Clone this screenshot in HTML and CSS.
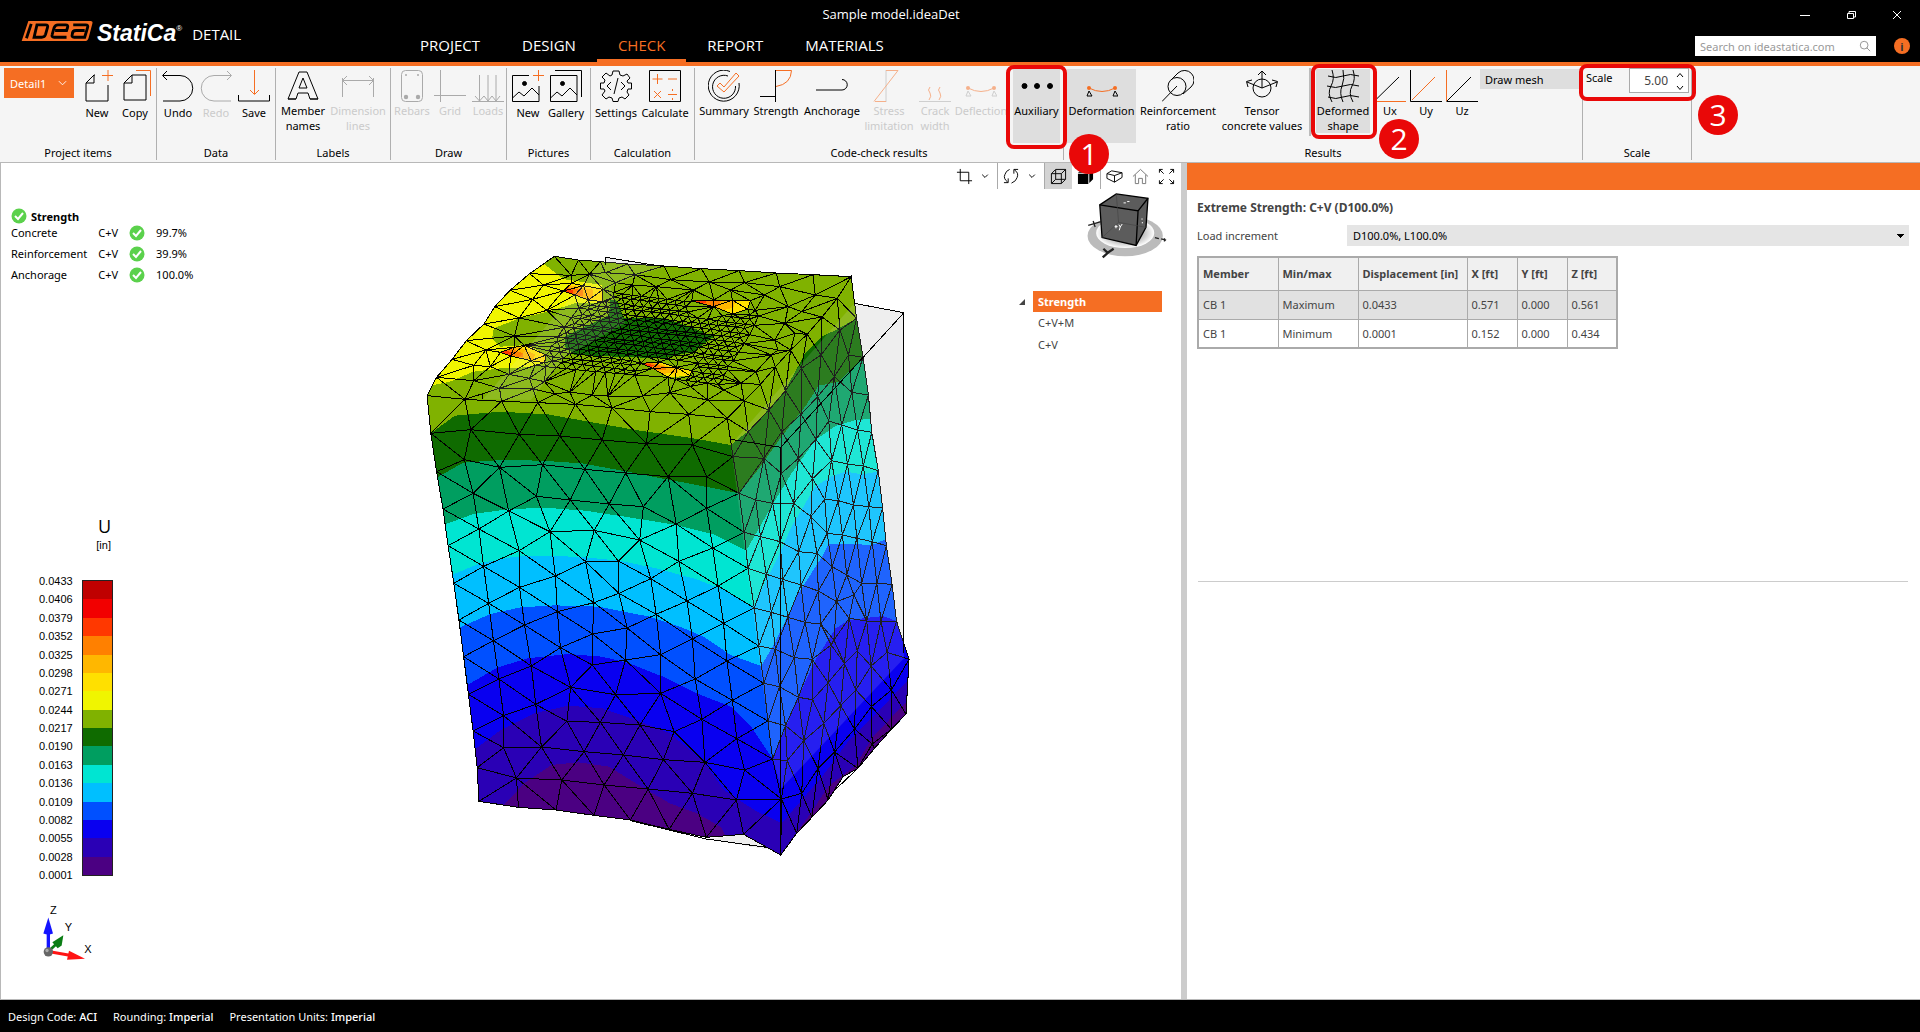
FILE: index.html
```
<!DOCTYPE html>
<html lang="en">
<head>
  <meta charset="UTF-8">
  <title>Sample model.ideaDet</title>
  <link rel="stylesheet" href="styles.css">
</head>
<body>
  <header class="topbar">
    <div class="brand">
      <svg class="logo" viewBox="0 0 74 22" aria-hidden="true">
        <path d="M7 0H72Q75 0 74 3L70 18Q69 21 66 21H0Z" fill="#f56e23"/>
        <g fill="none" stroke="#000" stroke-width="3">
          <path d="M10 3L5 18M16 4H25Q28 4 27 7L25 14Q24 17 21 17H13Z"/>
          <path d="M47 17H34Q31 17 32 14L34 7Q35 4 38 4H46Q49 4 48 7L47 10H35"/>
          <path d="M54 4H67Q70 4 69 7L66 17H55Q52 17 53 14Q53 10 57 10H66"/>
        </g>
      </svg>
      <span class="logo-text">StatiCa<sup>®</sup></span>
      <span class="app-name">DETAIL</span>
    </div>
    <nav class="tabs">
      <a href="#">PROJECT</a>
      <a href="#">DESIGN</a>
      <a href="#" class="active">CHECK</a>
      <a href="#">REPORT</a>
      <a href="#">MATERIALS</a>
    </nav>
    <div class="title">Sample model.ideaDet</div>
    <div class="window-side">
      <div class="window-buttons">
        <button aria-label="Minimize"><svg viewBox="0 0 10 10"><path d="M0 5.500H10"/></svg></button>
        <button aria-label="Restore"><svg viewBox="0 0 10 10"><path d="M1.500 3.500H7.500V8.500H1.500ZM3 3V1.500H9.500V7H8"/></svg></button>
        <button aria-label="Close"><svg viewBox="0 0 10 10"><path d="M1 1L9 9M9 1L1 9"/></svg></button>
      </div>
      <div class="search-row">
        <label class="search">
          <input type="text" aria-label="Search" placeholder="Search on ideastatica.com">
          <svg viewBox="0 0 14 14"><circle cx="6" cy="6" r="4.500"/><path d="M9 9L13 13"/></svg>
        </label>
        <button class="info" aria-label="Info">i</button>
      </div>
    </div>
  </header>

  <section class="ribbon">
    <div class="group g-project">
      <div class="items low">
        <button class="detail-select">Detail1 <svg viewBox="0 0 10 6"><path d="M1 1L5 5L9 1"/></svg></button>
        <button class="tool w38"><svg viewBox="0 0 32 32"><path d="M14 5H13L5 13V31H27V15M13 5V13H5"/><path class="o" d="M27 0V11M21 5.500H32"/></svg>New</button>
        <button class="tool w38"><svg viewBox="0 0 32 32"><path d="M13 5H27V30H5V13ZM13 5V13H5"/><path class="o" d="M17 0.500H31.500V26"/></svg>Copy</button>
      </div>
      <h3>Project items</h3>
    </div>
    <div class="group g-data">
      <div class="items low">
        <button class="tool w38"><svg viewBox="0 0 32 32"><path d="M5 1L0.500 5.500L5 10M1 5.500H18A12.500 12.500 0 0 1 18 31H1"/></svg>Undo</button>
        <button class="tool w38 off"><svg viewBox="0 0 32 32"><path d="M27 1L31.500 5.500L27 10M31 5.500H14A12.500 12.500 0 0 0 14 31H31"/></svg>Redo</button>
        <button class="tool w38"><svg viewBox="0 0 32 32"><path d="M0.500 25V31H31.500V25"/><path class="o" d="M16.500 0V24M12 20L16.500 24.500L21 20"/></svg>Save</button>
      </div>
      <h3>Data</h3>
    </div>
    <div class="group g-labels">
      <div class="items">
        <button class="tool w50"><svg viewBox="0 0 32 32"><path d="M12 2H20L31 29H23L21 23H11L9 29H1ZM12 18H20L16 8ZM1 29H9M23 29H31"/></svg>Member<br>names</button>
        <button class="tool w60 off"><svg viewBox="0 0 32 32"><path d="M0.500 8V27M31.500 8V27M1 10.500H31M5 6L0.500 10.500L5 15M27 6L31.500 10.500L27 15"/></svg>Dimension<br>lines</button>
      </div>
      <h3>Labels</h3>
    </div>
    <div class="group g-draw">
      <div class="items">
        <button class="tool w38 off"><svg viewBox="0 0 32 32"><rect x="5.500" y="0.500" width="21" height="31" rx="4"/><g fill="#aaa" stroke="none"><circle cx="10" cy="5" r="1"/><circle cx="22" cy="5" r="1"/><circle cx="10" cy="27" r="2.200"/><circle cx="22" cy="27" r="2.200"/></g></svg>Rebars</button>
        <button class="tool w38 off"><svg viewBox="0 0 32 32"><path d="M6.500 0V32M0 25.500H32"/></svg>Grid</button>
        <button class="tool w38 off"><svg viewBox="0 0 32 32"><path d="M0 31.500H32M7.500 5V31M16 5V31M24 5V31M3 26L7.500 31L12 26L16 31L20 26L24 31L28 26"/></svg>Loads</button>
      </div>
      <h3>Draw</h3>
    </div>
    <div class="group g-pictures">
      <div class="items low">
        <button class="tool w38"><svg viewBox="0 0 32 32"><path d="M17 5.500H0.500V31.500H27V16M0.500 28L7 22L12 26L20 18L27 25"/><circle cx="12.500" cy="13.500" r="2" fill="#000"/><path class="o" d="M26.500 0V11M21 5.500H32"/></svg>New</button>
        <button class="tool w38"><svg viewBox="0 0 32 32"><path d="M0.500 5.500H27V31.500H0.500ZM5 0.500H31.500V27M0.500 28L7 22L12 26L20 18L27 25"/><circle cx="12.500" cy="13.500" r="2" fill="#000"/></svg>Gallery</button>
      </div>
      <h3>Pictures</h3>
    </div>
    <div class="group g-calc">
      <div class="items low">
        <button class="tool w46"><svg viewBox="0 0 32 32"><path d="M13 1H19L20 5L23 6L27 4L30 8L27 11L28 13H31.500V19H28L27 22L29 25L25 29L22 27L19 28L18 31.500H13L12 28L9 27L6 29L2 25L5 21L4 19H0.500V13H4L5 10L2 7L6 3L10 6L12 5ZM11 12L7 16L11 20M21 12L25 16L21 20M18 8L14 24"/></svg>Settings</button>
        <button class="tool w52"><svg viewBox="0 0 32 32"><path d="M0.500 0.500H31.500V31.500H0.500Z"/><path class="o" d="M8.500 4V14M3.500 9H13.500M19 9H28M5 21L12 28M12 21L5 28M19 24.500H28M23.500 19V21M23.500 28V30"/></svg>Calculate</button>
      </div>
      <h3>Calculation</h3>
    </div>
    <div class="group g-check">
      <div class="items">
        <button class="tool w52"><svg viewBox="0 0 32 32"><path d="M22 1.500A15.500 15.500 0 1 0 31 13M20 6A11.500 11.500 0 1 0 27.500 16"/><path class="o" d="M9 16L12 13L16 17L28 3L31 6L16 22Z"/></svg>Summary</button>
        <button class="tool w52"><svg viewBox="0 0 32 32"><path d="M0 26.500H15.500M15.500 0V32"/><path class="o" d="M16 0.500H31.500Q31 14 16 16.500"/></svg>Strength</button>
        <button class="tool w60"><svg viewBox="0 0 32 32"><path d="M0 20H26A5 5 0 0 0 26 9.500"/></svg>Anchorage</button>
        <button class="tool w54 off faded"><svg viewBox="0 0 32 32"><path d="M13 0V32"/><path class="o" d="M2 31.500H13M13 0.500H25L1 31.500"/></svg>Stress<br>limitation</button>
        <button class="tool w38 off faded"><svg viewBox="0 0 32 32"><path d="M0 31.500H32"/><path class="o" d="M11 17Q8 20 11 23Q13 26 10 30M21 17Q18 20 21 23Q23 26 20 30"/></svg>Crack<br>width</button>
        <button class="tool w54 off faded"><svg viewBox="0 0 32 32"><path d="M3 21L1 26H6ZM29 21L27 26H32Z"/><path class="o" d="M3 18Q16 25 29 18"/><g fill="#f56e23" stroke="none"><circle cx="3" cy="18" r="2"/><circle cx="29" cy="18" r="2"/></g></svg>Deflection</button>
        <button class="tool w47 pressed"><svg viewBox="0 0 32 32"><g fill="#000"><circle cx="3.500" cy="16" r="2.500"/><circle cx="16" cy="16" r="2.500"/><circle cx="29" cy="16" r="2.500"/></g></svg>Auxiliary</button>
      </div>
      <h3>Code-check results</h3>
    </div>
    <div class="group g-results">
      <div class="items">
        <button class="tool w69 pressed"><svg viewBox="0 0 32 32"><path d="M3 21L1 26H6ZM29 21L27 26H32Z"/><path class="o" d="M3 18Q16 25 29 18"/><g fill="#f56e23" stroke="none"><circle cx="3" cy="18" r="2"/><circle cx="29" cy="18" r="2"/></g></svg>Deformation</button>
        <button class="tool w84"><svg viewBox="0 0 32 32"><circle cx="15" cy="16.500" r="9"/><path d="M9 10L16 3A9.500 9.500 0 1 1 29 17L21 24M0 31.500L15 16"/></svg>Reinforcement<br>ratio</button>
        <button class="tool w84"><svg viewBox="0 0 32 32"><circle cx="16" cy="18" r="9"/><path d="M16 18V1M12 5L16 1L20 5M16 18L1 12M2 17L0.500 11.500L6 10M16 18L31 12M26 10L31.500 11.500L30 17"/></svg>Tensor<br>concrete values</button>
        <span class="divider"></span>
        <button class="tool w54 pressed short"><svg viewBox="0 0 32 32"><path d="M5 0Q8 9 4 16T5 32M16 0Q18 9 15 16T16 32M26 0Q29 9 25 16T26 32M1 6Q9 9 16 6T32 6M0 16Q9 19 16 16T32 16M1 27Q9 30 16 27T32 27"/></svg>Deformed<br>shape</button>
        <button class="tool w37"><svg viewBox="0 0 32 32"><path d="M0.500 31L25 7"/><path class="o" d="M0 31.500H32"/></svg>Ux</button>
        <button class="tool w37"><svg viewBox="0 0 32 32"><path d="M0.500 0V31.500H32"/><path class="o" d="M2 30L25 7"/></svg>Uy</button>
        <button class="tool w37"><svg viewBox="0 0 32 32"><path d="M0.500 31.500H32M1 31L25 7"/><path class="o" d="M0.500 0V31"/></svg>Uz</button>
        <button class="mesh-toggle">Draw mesh</button>
      </div>
      <h3>Results</h3>
    </div>
    <div class="group g-scale">
      <div class="items">
        <label for="scale">Scale</label>
        <div class="spinner">
          <input id="scale" type="text" value="5.00">
          <svg viewBox="0 0 8 18"><path d="M1 5L4 1.500L7 5M1 14L4 17.500L7 14"/></svg>
        </div>
      </div>
      <h3>Scale</h3>
    </div>
    <div class="mark mark-aux"></div><span class="step step-aux">1</span>
    <div class="mark mark-shape"></div><span class="step step-shape">2</span>
    <div class="mark mark-scale"></div><span class="step step-scale">3</span>
  </section>

  <main>
    <section class="viewport">
      <div class="summary">
        <h2><svg class="ok" viewBox="0 0 16 16"><circle cx="8" cy="8" r="7.500"/><path d="M4 8L7 11L12 5"/></svg>Strength</h2>
        <table>
          <tr><td>Concrete</td><td>C+V</td><td><svg class="ok" viewBox="0 0 16 16"><circle cx="8" cy="8" r="7.500"/><path d="M4 8L7 11L12 5"/></svg></td><td>99.7%</td></tr>
          <tr><td>Reinforcement</td><td>C+V</td><td><svg class="ok" viewBox="0 0 16 16"><circle cx="8" cy="8" r="7.500"/><path d="M4 8L7 11L12 5"/></svg></td><td>39.9%</td></tr>
          <tr><td>Anchorage</td><td>C+V</td><td><svg class="ok" viewBox="0 0 16 16"><circle cx="8" cy="8" r="7.500"/><path d="M4 8L7 11L12 5"/></svg></td><td>100.0%</td></tr>
        </table>
      </div>

      <div class="legend">
        <div class="legend-head">U<small>[in]</small></div>
        <div class="legend-body">
          <ol id="legendValues"></ol>
          <div class="bar" id="legendBar"></div>
        </div>
      </div>

      <svg class="triad" viewBox="0 -15 180 185">
        <path d="M34 130L70 96" stroke="#0a7d14" stroke-width="8"/><path d="M79 81L46 102L62 120L74 112Z" fill="#0a7d14"/>
        <path d="M34 130V70" stroke="#1414ff" stroke-width="10"/><path d="M34 28L19 76Q34 82 48 76Z" fill="#1414ff"/>
        <path d="M34 130L98 141" stroke="#ff1414" stroke-width="9"/><path d="M144 152L96 128L90 155Z" fill="#ff1414"/>
        <circle cx="34" cy="131" r="14" fill="#666"/><circle cx="30" cy="127" r="5" fill="#aaa"/>
        <text x="39" y="17">Z</text><text x="83" y="68">Y</text><text x="142" y="134">X</text>
      </svg>

      <svg class="model" id="model" viewBox="0 0 1566 1890" preserveAspectRatio="none"></svg>

      <div class="view-tools">
        <button><svg viewBox="0 0 18 18"><path d="M4.500 1V13.500H17M1 4.500H13.500V17"/></svg></button>
        <button class="drop"><svg viewBox="0 0 8 18"><path d="M1 7L4 10L7 7"/></svg></button>
        <button class="sep"><svg viewBox="0 0 18 18"><path d="M5 15Q0 11 2 7Q3 3 7 1.500M1 15.500H5.500V11M12 2Q17 5 15 10Q14 14 9 16M16 1.500H11.500V6"/></svg></button>
        <button class="drop"><svg viewBox="0 0 8 18"><path d="M1 7L4 10L7 7"/></svg></button>
        <button class="sep on"><svg viewBox="0 0 18 18"><path d="M1.500 6H12V16.500H1.500ZM1.500 6L6 1.500H16.500L12 6M16.500 1.500V12L12 16.500M6 2V12H16M6 12L2 16"/></svg></button>
        <button class="solid"><svg viewBox="0 0 18 18"><path fill="#000" stroke="none" d="M1 6H12V17H1ZM1 5L6 1H17L12 5ZM17 2V12L13 16V6Z"/></svg></button>
        <button class="sep"><svg viewBox="0 0 18 18"><path d="M1 6L6 3L17 5L9 8ZM1 6V11L9 15V8M9 15L17 10V5"/></svg></button>
        <button><svg class="grey" viewBox="0 0 18 18"><path d="M1 9L9 1.500L17 9M3.500 7V16.500H7V11H11V16.500H14.500V7"/></svg></button>
        <button><svg viewBox="0 0 18 18"><path d="M1.500 5V1.500H5M1.500 1.500L6 6M13 1.500H16.500V5M16.500 1.500L12 6M1.500 13V16.500H5M1.500 16.500L6 12M13 16.500H16.500V13M16.500 16.500L12 12"/></svg></button>
      </div>

      <svg class="nav-cube" viewBox="440 90 250 212">
        <defs><radialGradient id="shade"><stop offset="0.500" stop-color="#aaa"/><stop offset="1" stop-color="#fff"/></radialGradient></defs>
        <ellipse cx="558" cy="229" rx="114" ry="62" fill="#bbb"/>
        <ellipse cx="558" cy="220" rx="88" ry="46" fill="url(#shade)"/>
        <path d="M481 135L531 102L627 115L621 203L591 258L488 234Z" fill="#5c5c5c" stroke="#000" stroke-width="4"/>
        <path d="M481 135L597 153L591 258M597 153L627 115" fill="none" stroke="#000" stroke-width="4"/>
        <path d="M531 102L538 188L488 234M538 188L621 203" fill="none" stroke="#444" stroke-width="2"/>
        <path d="M446 197L485 186M461 184L467 202M648 234L660 237M667 238L682 242M677 236V246" fill="none" stroke="#222" stroke-width="4"/>
        <path d="M492 268L505 280L523 268M507 279L490 294" fill="none" stroke="#222" stroke-width="7"/>
        <path d="M553 129H560M564 125H571M609 176V180M610 187V191M526 201H535M530 196V206M539 195L543 202L549 193M543 202L540 212" stroke="#fff" stroke-width="3" fill="none"/>
      </svg>

      <ul class="tree">
        <li class="selected"><a href="#">Strength</a></li>
        <li><a href="#">C+V+M</a></li>
        <li><a href="#">C+V</a></li>
      </ul>
    </section>

    <aside class="results">
      <div class="strip"></div>
      <div class="results-body">
        <h2>Extreme Strength: C+V (D100.0%)</h2>
        <div class="field">
          <label for="increment">Load increment</label>
          <select id="increment"><option>D100.0%, L100.0%</option></select>
        </div>
        <table class="data">
          <thead>
            <tr><th>Member</th><th>Min/max</th><th>Displacement [in]</th><th>X [ft]</th><th>Y [ft]</th><th>Z [ft]</th></tr>
          </thead>
          <tbody>
            <tr class="picked"><td>CB 1</td><td>Maximum</td><td>0.0433</td><td>0.571</td><td>0.000</td><td>0.561</td></tr>
            <tr><td>CB 1</td><td>Minimum</td><td>0.0001</td><td>0.152</td><td>0.000</td><td>0.434</td></tr>
          </tbody>
        </table>
      </div>
      <hr>
    </aside>
  </main>

  <footer class="status">
    <span>Design Code: <b>ACI</b></span>
    <span>Rounding: <b>Imperial</b></span>
    <span>Presentation Units: <b>Imperial</b></span>
  </footer>

  <script src="model.js"></script>
</body>
</html>
```

FILE: styles.css
```
* {
  box-sizing: border-box;
}

body {
  margin: 0;
  min-height: 100vh;
  display: flex;
  flex-direction: column;
  font: 11px/15px "Noto Sans", "Open Sans", sans-serif;
  color: #000;
  background: #fff;
}

button {
  font: inherit;
  color: inherit;
  border: 0;
  padding: 0;
  background: none;
}

a {
  color: inherit;
  text-decoration: none;
}

svg {
  fill: none;
  stroke: #000;
  flex: none;
}

h2, h3, ul, ol {
  margin: 0;
  padding: 0;
  font-size: 11px;
  list-style: none;
}

/* header */
.topbar {
  position: relative;
  display: flex;
  height: 66px;
  background: #000;
  border-bottom: 4px solid #f56e23;
  color: #fff;
}

.brand {
  display: flex;
  align-items: center;
  width: 399px;
  padding-left: 20px;
}

.logo {
  width: 74px;
  height: 21px;
  stroke: none;
}

.logo-text {
  margin-left: 3px;
  font: italic bold 23px/24px "Liberation Sans", sans-serif;
}

.logo-text sup {
  font-size: 8px;
  font-weight: normal;
  font-style: normal;
  vertical-align: 10px;
}

.app-name {
  margin: 6px 0 0 10px;
  font: 15px/20px "Open Sans", sans-serif;
}

.tabs {
  display: flex;
  align-items: flex-end;
}

.tabs a {
  padding: 0 21px 6px;
  font: 15px/16px "Open Sans", sans-serif;
  border-bottom: 3px solid transparent;
}

.tabs .active {
  color: #f56e23;
  border-color: #f56e23;
}

.title {
  position: absolute;
  left: 0;
  right: 138px;
  top: 6px;
  text-align: center;
  font: 13px/16px "Open Sans", sans-serif;
  pointer-events: none;
}

.window-side {
  margin-left: auto;
  width: 225px;
}

.window-buttons {
  display: flex;
  justify-content: flex-end;
  gap: 36px;
  padding: 9px 18px 0 0;
}

.window-buttons svg {
  display: block;
  width: 10px;
  height: 12px;
  stroke: #fff;
}

.search-row {
  display: flex;
  align-items: center;
  gap: 18px;
  margin-top: 15px;
}

.search {
  display: flex;
  align-items: center;
  width: 181px;
  height: 20px;
  padding: 0 5px;
  background: #fff;
}

.search input {
  flex: 1;
  min-width: 0;
  border: 0;
  padding: 0;
  background: none;
  font: inherit;
}

.search input::placeholder {
  color: #999;
}

.search svg {
  width: 12px;
  height: 12px;
  stroke: #888;
}

.info {
  width: 16px;
  height: 16px;
  border-radius: 8px;
  background: #f56e23;
  color: #333;
  font-weight: bold;
  line-height: 15px;
}

/* ribbon */
.ribbon {
  position: relative;
  display: flex;
  height: 97px;
  padding-top: 2px;
  background: #f5f5f5;
  border-bottom: 1px solid #b8b8b8;
}

.group {
  display: flex;
  flex-direction: column;
  justify-content: space-between;
  height: 92px;
  border-right: 1px solid #b0b0b0;
}

.group h3 {
  font-weight: normal;
  line-height: 14px;
  text-align: center;
}

.items {
  display: flex;
  height: 75px;
  padding-left: 3px;
}

.g-project { width: 157px; }
.g-data { width: 119px; }
.g-labels { width: 115px; }
.g-draw { width: 116px; }
.g-pictures { width: 84px; }
.g-calc { width: 104px; }
.g-check { width: 369px; }
.g-results { width: 519px; }
.g-scale { width: 109px; }

.g-project .items {
  padding-left: 4px;
}

.g-labels .items,
.g-draw .items,
.g-data .items,
.g-calc .items,
.g-pictures .items {
  padding-left: 2px;
}

.detail-select {
  display: flex;
  align-items: center;
  justify-content: space-between;
  width: 70px;
  height: 30px;
  margin-right: 4px;
  padding: 0 7px 0 6px;
  background: #f56e23;
  color: #fff;
}

.detail-select svg {
  width: 9px;
  height: 6px;
  stroke: #fff;
}

.tool {
  display: flex;
  flex-direction: column;
  align-items: center;
  flex: none;
  height: 74px;
  margin-top: 1px;
  padding-top: 1px;
  white-space: nowrap;
}

.tool svg {
  width: 32px;
  height: 32px;
  margin-bottom: 1px;
}

.low .tool svg {
  margin-bottom: 3px;
}

.w37 { width: 36px; }
.w38 { width: 38px; }
.w46 { width: 46px; }
.w47 { width: 47px; margin-left: 5px; }
.w50 { width: 50px; }
.w52 { width: 52px; }
.w54 { width: 54px; }
.w60 { width: 60px; }
.w69 { width: 69px; }
.w84 { width: 84px; }

.o {
  stroke: #f56e23;
}

.off {
  color: #cbcbcb;
}

.off svg {
  stroke: #aaa;
}

.faded svg {
  opacity: 0.5;
}

.pressed {
  background: #dedede;
}

.short {
  height: 64px;
  margin-right: 2px;
}

.divider {
  width: 2px;
  height: 68px;
  margin: 0 5px;
  background: #bbb;
}

.mesh-toggle {
  flex: 1;
  height: 20px;
  margin: 1px 3px 0 0;
  padding-left: 5px;
  text-align: left;
  background: #dedede;
}

.g-scale label {
  margin-top: 2px;
}

.spinner {
  display: flex;
  align-items: center;
  width: 60px;
  height: 25px;
  margin: 0 2px 0 auto;
  padding-right: 4px;
  border: 1px solid #aaa;
  background: #fff;
}

.spinner input {
  flex: 1;
  min-width: 0;
  padding: 0 8px 0 0;
  border: 0;
  background: none;
  font: inherit;
  font-size: 12px;
  color: #444;
  text-align: right;
}

.spinner svg {
  width: 8px;
  height: 18px;
}

/* numbered callouts lie over the ribbon */
.mark {
  position: absolute;
  border: 4px solid #e90808;
  border-radius: 8px;
}

.step {
  position: absolute;
  width: 40px;
  height: 40px;
  border-radius: 20px;
  background: #e90808;
  color: #fff;
  font: 500 30px/40px "Open Sans", sans-serif;
  text-align: center;
  z-index: 2;
}

.mark-aux { left: 1006px; top: -1px; width: 61px; height: 84px; }
.mark-shape { left: 1311px; top: -2px; width: 66px; height: 75px; }
.mark-scale { left: 1579px; top: -2px; width: 117px; height: 37px; }
.step-aux { left: 1069px; top: 68px; }
.step-shape { left: 1379px; top: 53px; }
.step-scale { left: 1698px; top: 29px; }

/* work area */
main {
  flex: 1;
  display: flex;
  border-bottom: 1px solid #b8b8b8;
}

.viewport {
  position: relative;
  width: 1187px;
  border-left: 1px solid #b8b8b8;
  border-right: 6px solid #ccc;
}

.summary {
  position: absolute;
  left: 10px;
  top: 45px;
}

.summary h2 {
  display: flex;
  align-items: center;
  gap: 4px;
  height: 16px;
}

.summary table {
  border-collapse: collapse;
  margin-top: -2px;
}

.summary td {
  height: 21px;
  padding: 0 11px 0 0;
}

.ok {
  display: block;
  width: 16px;
  height: 16px;
  fill: #5bd14c;
  stroke: none;
}

.ok path {
  fill: none;
  stroke: #fff;
  stroke-width: 2;
}

.legend {
  position: absolute;
  left: 38px;
  top: 353px;
  width: 74px;
  font: 11px/12px "Liberation Sans", sans-serif;
}

.legend-head {
  display: flex;
  flex-direction: column;
  align-items: flex-end;
  padding-right: 2px;
  font: 18px/20px "Open Sans", sans-serif;
}

.legend small {
  font: 11px/18px "Liberation Sans", sans-serif;
}

.legend-body {
  display: flex;
  justify-content: space-between;
  align-items: center;
  margin-top: 21px;
}

.legend ol {
  display: flex;
  flex-direction: column;
  justify-content: space-between;
  height: 306px;
}

.bar {
  display: flex;
  flex-direction: column;
  width: 31px;
  height: 296px;
  border: 1px solid #222;
}

.bar i {
  flex: 1;
}

.triad {
  position: absolute;
  left: 36px;
  top: 740px;
  width: 60px;
  height: 62px;
  stroke: none;
  font: 33px "Liberation Sans", sans-serif;
}

.triad text {
  fill: #000;
}

.model {
  position: absolute;
  left: 398px;
  top: 77px;
  width: 530px;
  height: 630px;
}

.view-tools {
  position: absolute;
  top: 0;
  right: 2px;
  display: flex;
  align-items: center;
}

.view-tools button {
  height: 26px;
  padding: 0 4px 0 5px;
}

.view-tools .drop {
  padding: 0 8px 0 4px;
}

.view-tools .sep {
  border-left: 1px solid #aaa;
}

.view-tools .on {
  padding: 0 5px;
  background: #d4d4d4;
}

.view-tools .solid {
  padding: 0 6px 0 5px;
}

.view-tools svg {
  display: block;
  width: 17px;
  height: 17px;
}

.view-tools .drop svg {
  width: 8px;
}

.view-tools .grey {
  stroke: #777;
}

.nav-cube {
  position: absolute;
  right: 12px;
  top: 27px;
  width: 83px;
  height: 70px;
  stroke: none;
}

.tree {
  position: absolute;
  right: 19px;
  top: 128px;
  width: 129px;
  color: #444;
}

.tree li {
  padding-left: 5px;
  line-height: 22px;
}

.tree .selected {
  position: relative;
  line-height: 21px;
  background: #f56e23;
  color: #fff;
  font-weight: bold;
}

.tree .selected::before {
  content: "";
  position: absolute;
  left: -14px;
  top: 8px;
  border-left: 6px solid transparent;
  border-bottom: 6px solid #444;
}

/* results panel */
.results {
  flex: 1;
  color: #444;
}

.strip {
  height: 27px;
  background: #f56e23;
}

.results-body {
  height: 391px;
  padding: 10px 11px 0 10px;
}

.results h2 {
  font-size: 12px;
  line-height: 16px;
}

.field {
  display: flex;
  align-items: center;
  margin: 9px 0 10px;
}

.field label {
  width: 150px;
}

.field select {
  flex: 1;
  height: 21px;
  padding: 0 6px;
  border: 0;
  appearance: none;
  font: inherit;
  color: #000;
  background-color: #e5e5e5;
  background-image: linear-gradient(#000, #000), linear-gradient(#000, #000), linear-gradient(#000, #000), linear-gradient(#000, #000);
  background-repeat: no-repeat;
  background-size: 7px 1px, 5px 1px, 3px 1px, 1px 1px;
  background-position: right 5px top 9px, right 6px top 10px, right 7px top 11px, right 8px top 12px;
}

.data {
  table-layout: fixed;
  width: 420px;
  border-collapse: collapse;
  border: 2px solid #aaa;
}

.data th,
.data td {
  height: 29px;
  padding: 0 4px;
  border: 1px solid #aaa;
  text-align: left;
  white-space: nowrap;
}

.data th {
  height: 33px;
  background: #f0f0f0;
}

.data th:nth-child(-n+2) { width: 80px; }
.data th:nth-child(3) { width: 109px; }
.data th:nth-child(n+4) { width: 50px; }

.picked {
  background: #e1e1e1;
}

hr {
  margin: 0 12px 0 11px;
  border: 0;
  border-top: 1px solid #ccc;
}

.status {
  display: flex;
  align-items: center;
  gap: 16px;
  height: 32px;
  padding-left: 8px;
  background: #000;
  color: #fff;
}

.status b {
  font-weight: 500;
}
```

FILE: model.js
```
const colors = ['#bf0000', '#f20000', '#ff3800', '#ff8000', '#ffb700', '#ffe000', '#f0f500', '#80b200',
  '#0f6b00', '#009e60', '#00e5d2', '#00bfff', '#0050ff', '#0900f0', '#2a00b5', '#4b0082'];
const values = ['0.0433', '0.0406', '0.0379', '0.0352', '0.0325', '0.0298', '0.0271', '0.0244', '0.0217',
  '0.0190', '0.0163', '0.0136', '0.0109', '0.0082', '0.0055', '0.0028', '0.0001'];

document.getElementById('legendValues').innerHTML = values.map(v => `<li>${v}</li>`).join('');
document.getElementById('legendBar').innerHTML = colors.map(c => `<i style="background:${c}"></i>`).join('');

// "x,y x,y ..." -> [[x, y], ...]
const pts = s => s.trim().split(/\s+/).map(p => p.split(',').map(Number));

const topBack = '459,49 530,60 595,65 676,72 783,78 893,86 1005,92 1115,99 1223,104 1336,110';
const topRight = '1295,175 1250,231 1206,283 1157,330 1112,381 1068,433 1020,483 970,535';
const topFront = '856,523 742,515 629,503 521,493 410,488 303,484 195,478 83,467';
const topLeft = '111,412 157,358 199,302 251,252 283,200 328,151 386,101';
const leftEdge = '94,580 111,695 130,807 145,917 162,1030 177,1140 191,1250 205,1363 219,1473 231,1583 236,1684';
const bottom = '353,1702 464,1710 576,1726 684,1740 798,1768 908,1792 1018,1783 1128,1845';
const corner = '987,650 1005,760 1020,877 1031,985 1050,1104 1063,1218 1078,1330 1090,1443 1104,1557 1130,1677';
const rightEdge = '1352,235 1371,352 1387,465 1397,577 1416,692 1429,804 1440,917 1457,1033 1470,1143 1507,1258 1498,1422';
const sideBottom = '1455,1468 1405,1525 1356,1585 1312,1610 1268,1680 1220,1732 1175,1780';
const rev = s => s.trim().split(/\s+/).reverse().join(' ');

const frontNodes = `212,569 355,583 475,588 600,600 731,611 867,615
  193,659 297,682 424,674 549,688 670,699 795,710 910,711
  219,760 406,769 506,780 621,792 722,800 909,805
  324,813 236,867 446,875 577,871 711,900 819,852 927,924
  355,932 250,979 551,965 648,963 744,1016 827,964 943,1038
  462,1008 356,1042 265,1090 468,1115 576,1088 650,1060 760,1123 851,1083 959,1150
  371,1155 279,1202 477,1223 572,1182 674,1164 773,1244 867,1197 969,1263
  391,1278 295,1317 507,1342 571,1275 669,1260 773,1360 875,1317 985,1381
  404,1393 309,1427 496,1444 640,1364 595,1447 712,1455 813,1475 895,1438 998,1496
  309,1523 421,1521 547,1535 663,1545 781,1559 904,1567 1021,1590
  347,1614 481,1620 606,1635 736,1647 867,1660 997,1680`;

const sideNodes = `1032,575 1093,510 1142,452 1189,385 1247,345 1303,270 1078,655 1131,575 1188,523 1237,470
  1286,410 1328,345 1054,780 1104,790 1130,700 1180,655 1232,598 1270,543 1308,555 1338,457 1355,570
  1068,890 1126,905 1166,790 1222,716 1278,662 1325,672 1372,678 1217,830 1258,778 1298,782 1343,795 1388,800
  1181,935 1235,940 1265,880 1310,885 1353,895 1398,905 1085,1003 1134,1018 1188,1035 1239,1053 1280,980
  1323,1005 1367,1030 1412,1030 1293,1085 1344,1065 1100,1117 1149,1132 1200,1147 1246,1152 1285,1200
  1330,1135 1382,1143 1424,1143 1112,1228 1168,1253 1221,1258 1277,1215 1316,1270 1354,1233 1395,1278
  1442,1237 1124,1340 1180,1372 1222,1379 1268,1328 1305,1397 1350,1350 1396,1400 1455,1350 1142,1457
  1196,1502 1255,1450 1287,1536 1346,1467 1147,1562 1190,1660 1238,1585 1398,1512`;

const topNodes = `509,106 563,102 610,98 697,104 803,119 917,126 1021,128 1125,140 1230,165 427,135 395,178
  437,211 355,234 341,288 257,330 221,376 221,422 297,445 396,447 461,462 571,465 505,456 617,468 720,468
  800,458 912,480 861,440 1010,430 1055,395 1100,345 1110,300 1140,250 1150,200 1080,165 980,150 870,150
  760,140 690,135 640,128 1190,215 1170,280 1120,330 960,450 325,403 270,380 385,415 430,425`;

// anchor hot spots: tip, then the fan behind it
const anchors = [
  ['485,153', '510,130 545,137 603,148 600,185 560,180 520,165'],
  ['865,183', '930,180 985,180 1038,182 1030,208 985,222 930,200'],
  ['300,337', '340,322 370,316 435,345 430,368 390,362 330,348'],
  ['715,370', '770,366 820,382 865,392 860,407 795,412 750,385'],
];
const nearAnchor = (x, y) => anchors.some(a => {
  const all = pts(a.join(' '));
  const xs = all.map(p => p[0]), ys = all.map(p => p[1]);
  return x > Math.min(...xs) - 6 && x < Math.max(...xs) + 6 && y > Math.min(...ys) - 3 && y < Math.max(...ys) + 3;
});

// fine mesh around the base plate
let dense = '';
for (let i = 0; i <= 18; i++) {
  for (let j = 0; j <= 16; j++) {
    const u = (i + (j % 2) * 0.5) / 19, v = j / 16;
    const wob = Math.sin(i * 12.9 + j * 78.2) * 4;
    const x = (580 + 500 * u) * (1 - v) + (400 + 570 * u) * v + wob;
    const y = (150 + 65 * u) * (1 - v) + (375 + 60 * u) * v + wob / 2;
    if (!nearAnchor(x, y)) dense += ` ${Math.round(x)},${Math.round(y)}`;
  }
}

// Delaunay triangulation; sx, sy undo the foreshortening of a face
function triangulate(points, sx, sy) {
  const p = points.map(([x, y], i) => [x * sx + (i % 7) * 0.01, y * sy + (i % 5) * 0.01]);
  const n = p.length;
  p.push([-20000, -20000], [30000, -20000], [0, 40000]);
  const make = (a, b, c) => {
    const [ax, ay] = p[a], [bx, by] = p[b], [cx, cy] = p[c];
    const d = 2 * (ax * (by - cy) + bx * (cy - ay) + cx * (ay - by));
    const a2 = ax * ax + ay * ay, b2 = bx * bx + by * by, c2 = cx * cx + cy * cy;
    const x = (a2 * (by - cy) + b2 * (cy - ay) + c2 * (ay - by)) / d;
    const y = (a2 * (cx - bx) + b2 * (ax - cx) + c2 * (bx - ax)) / d;
    return { v: [a, b, c], x, y, r: (ax - x) ** 2 + (ay - y) ** 2 };
  };
  let tris = [make(n, n + 1, n + 2)];
  for (let i = 0; i < n; i++) {
    const edges = new Map();
    tris = tris.filter(t => {
      if ((p[i][0] - t.x) ** 2 + (p[i][1] - t.y) ** 2 >= t.r) return true;
      [[0, 1], [1, 2], [2, 0]].forEach(([a, b]) => {
        const e = [t.v[a], t.v[b]].sort((m, k) => m - k);
        const key = e.join();
        if (edges.has(key)) edges.delete(key); else edges.set(key, e);
      });
      return false;
    });
    edges.forEach(([a, b]) => tris.push(make(a, b, i)));
  }
  return tris.filter(t => t.v.every(k => k < n)).map(t => t.v);
}

// every edge is drawn once
function mesh(nodes, sx, sy, clip) {
  const points = pts(nodes);
  const seen = new Set();
  triangulate(points, sx, sy).forEach(([a, b, c]) => {
    [[a, b], [b, c], [c, a]].forEach(e => seen.add(e.sort((m, k) => m - k).join()));
  });
  const d = [...seen].map(e => 'M' + e.split(',').map(k => points[k].join(' ')).join('L')).join('');
  return `<path d="${d}" clip-path="url(#${clip})"/>`;
}

const front = `83,467 ${leftEdge} ${bottom} ${rev(corner)} 970,535 ${topFront}`;
const side = `${rev(topRight)} 1336,110 ${rightEdge} ${sideBottom} 1128,1845 ${rev(corner)}`;
const topFace = `${topBack} ${topRight} ${topFront} ${topLeft}`;

// upper limit of every colour band, left edge to right edge
const bands = [
  [8, '80,590 94,580 165,527 300,515 440,523 560,545 700,570 870,595 980,615 1030,575 1090,510 1140,452 1200,340 1250,290 1300,265 1352,235'],
  [9, '100,720 113,712 190,668 300,660 420,662 540,670 660,692 760,712 880,735 1005,760 1060,690 1130,590 1200,500 1240,437 1300,425 1340,385 1371,352'],
  [10, '120,860 136,853 220,822 320,808 430,803 550,812 680,832 820,855 930,883 1026,932 1100,800 1160,700 1230,600 1290,558 1350,540 1393,537'],
  [11, '150,1008 160,1003 240,970 340,950 450,947 550,952 650,962 760,985 880,1018 960,1050 1048,1100 1085,1020 1120,950 1160,860 1230,740 1280,708 1320,695 1370,703 1416,695'],
  [12, '160,1170 179,1163 270,1122 360,1102 460,1096 590,1100 740,1130 830,1160 900,1190 980,1245 1070,1278 1110,1210 1180,1060 1250,950 1270,912 1400,914 1440,897'],
  [13, '190,1340 202,1335 290,1283 380,1255 500,1242 600,1250 680,1270 780,1310 880,1360 980,1400 1040,1460 1104,1557 1180,1370 1230,1260 1290,1165 1330,1140 1430,1128 1470,1143'],
  [14, '210,1540 228,1525 300,1470 400,1420 500,1397 600,1405 700,1440 800,1480 860,1530 904,1570 960,1650 1050,1710 1130,1750 1190,1680 1250,1610 1330,1500 1400,1430 1510,1315'],
];
const bandShapes = bands.map(([c, s]) => `<polygon fill="${colors[c]}" points="${s} 1600,1300 1600,1890 0,1890"/>`).join('');

const hot = anchors.map(([tip, fan]) => {
  const [tx, ty] = pts(tip)[0];
  const at = k => pts(fan).map(([x, y]) => `${tx + (x - tx) * k},${ty + (y - ty) * k}`).join(' ');
  return `<polygon fill="#ffe000" points="${tip} ${at(1)}"/><polygon fill="#ffb700" points="${tip} ${at(0.75)}"/>
    <polygon fill="#ff8000" points="${tip} ${at(0.5)}"/><polygon fill="#ff3800" points="${tip} ${at(0.25)}"/>`;
}).join('');
const fanNodes = anchors.map(a => a.join(' ')).join(' ');

document.getElementById('model').innerHTML = `
  <defs>
    <clipPath id="front"><polygon points="${front}"/></clipPath>
    <clipPath id="side"><polygon points="${side}"/></clipPath>
    <clipPath id="top"><polygon points="${topFace}"/></clipPath>
  </defs>
  <g stroke="none" shape-rendering="crispEdges">
    <polygon fill="#eee" points="1336,188 1492,218 1492,1240 1400,1300 1128,1200"/>
    <polygon fill="#eee" points="610,52 783,80 610,80"/>
    <polygon fill="#eee" points="908,1797 1018,1783 1128,1835"/>
    <polygon fill="${colors[7]}" points="${front}"/>
    <polygon fill="${colors[7]}" points="${side}"/>
    <g clip-path="url(#front)">${bandShapes}
      <polygon fill="${colors[15]}" points="310,1695 370,1630 450,1575 530,1567 620,1580 700,1630 800,1690 880,1720 950,1760 972,1800 600,1800"/>
    </g>
    <g clip-path="url(#side)">${bandShapes}
      <polygon fill="${colors[15]}" points="1128,1845 1180,1770 1220,1715 1268,1640 1350,1575 1400,1490 1510,1375 1510,1450 1300,1800"/>
    </g>
    <polygon fill="${colors[7]}" points="${topFace}"/>
    <g clip-path="url(#top)">
      <polygon fill="${colors[6]}" points="430,73 470,105 490,118 600,135 603,165 590,190 520,190 440,215 355,235 280,265 275,295 300,320 380,315 435,345 430,370 375,382 300,385 220,395 150,425 90,438 60,430 300,100"/>
      <polygon fill="${colors[8]}" points="490,290 560,255 620,225 625,178 645,182 665,235 780,235 860,260 930,290 870,335 780,355 640,350 520,345 490,320"/>
    </g>
    ${hot}
  </g>
  <g fill="none" stroke="#000" stroke-width="3" shape-rendering="crispEdges">
    ${mesh(`${topFront} ${leftEdge} ${frontNodes} ${corner} ${bottom} 970,535`, 1, 1, 'front')}
    ${mesh(`1336,110 ${topRight} ${rightEdge} ${sideNodes} ${corner} ${sideBottom} 1128,1845`, 2, 1, 'side')}
    ${mesh(`${topBack} ${topRight} ${topFront} ${topLeft} ${topNodes} ${dense} ${fanNodes}`, 1, 2, 'top')}
    <polygon points="${front}"/><polygon points="${side}"/><polygon points="${topFace}"/>
  </g>
  <g fill="#eee" fill-opacity="0.13" stroke="none">
    <polygon points="1345,190 1492,218 1492,1255 1130,1645 1104,1557 980,615"/>
    <polygon points="610,52 783,80 700,110 625,140 668,250 490,350 390,480 248,478"/>
  </g>
  <path d="M610 75V52L783 80M1345 190L1492 218V1240M1492 218L1128 622M980 598L1128 622V1845M248 478V460M684 1742L908 1797L1085 1822M1286 1652L1356 1585"
    fill="none" stroke="#000" stroke-width="3" shape-rendering="crispEdges"/>`;
```
